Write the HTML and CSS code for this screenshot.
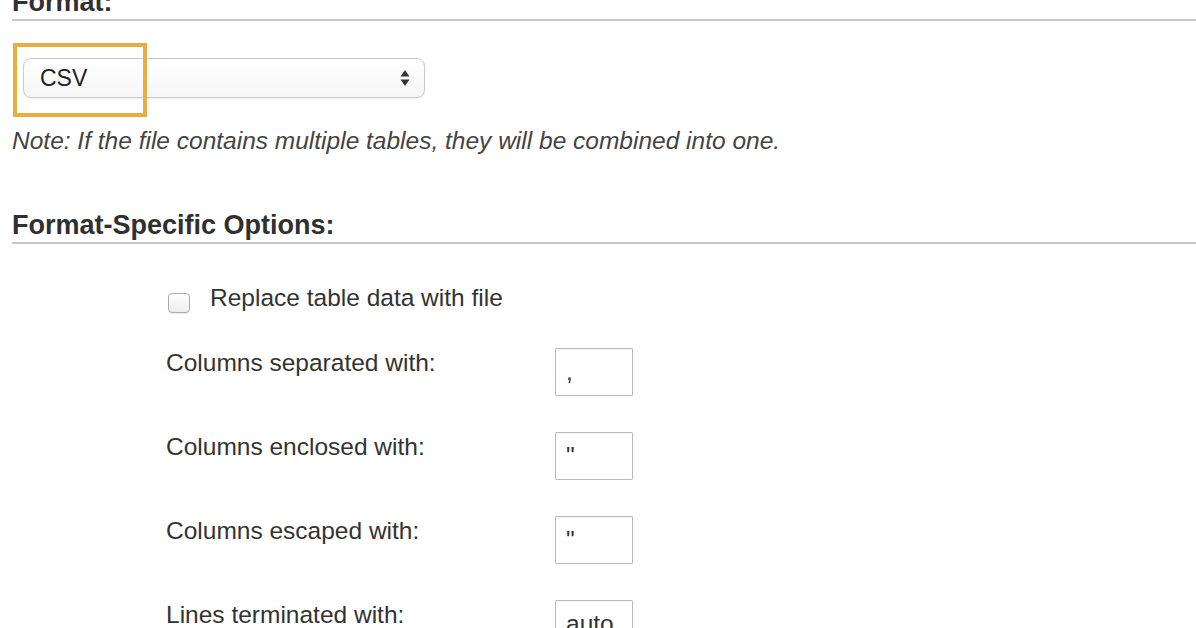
FILE: index.html
```html
<!DOCTYPE html>
<html lang="en">
<head>
  <meta charset="UTF-8" />
  <title>Import - Format</title>
  <link rel="stylesheet" href="styles.css">
</head>
<body>
  <div class="page">
    <h2 class="section-title">Format:</h2>

    <div class="format-field">
      <div class="select-box">
        <span>CSV</span>
        <svg class="select-arrows" width="12" height="18" viewBox="0 0 12 18">
          <path d="M6 1 L10.5 7.5 H1.5 Z" fill="#333"/>
          <path d="M6 17 L10.5 10.5 H1.5 Z" fill="#333"/>
        </svg>
      </div>
      <div class="highlight"></div>
    </div>

    <p class="note">Note: If the file contains multiple tables, they will be combined into one.</p>

    <h2 class="section-title spaced">Format-Specific Options:</h2>

    <div class="options">
      <label class="check-row">
        <input type="checkbox" class="check">
        <span>Replace table data with file</span>
      </label>

      <div class="fields">
        <label for="sep">Columns separated with:</label>
        <input type="text" id="sep" value=",">

        <label for="enc">Columns enclosed with:</label>
        <input type="text" id="enc" value="&quot;">

        <label for="esc">Columns escaped with:</label>
        <input type="text" id="esc" value="&quot;">

        <label for="term">Lines terminated with:</label>
        <input type="text" id="term" value="auto">
      </div>
    </div>
  </div>
</body>
</html>
```

FILE: styles.css
```css
html, body {
  margin: 0;
  background: #fff;
  overflow: hidden;
}
body {
  font-family: "Liberation Sans", Arial, sans-serif;
  color: #333;
  padding-left: 12px;
}
.page {
  margin-top: -13px;
}
.section-title {
  margin: 0;
  font-size: 27px;
  line-height: 30px;
  font-weight: bold;
  color: #303030;
  padding-bottom: 2px;
  border-bottom: 2px solid #c8c8c8;
}
.section-title.spaced {
  margin-top: 54px;
}
.format-field {
  position: relative;
  margin: 37px 0 0 11px;
  width: 402px;
}
.select-box {
  display: flex;
  align-items: center;
  justify-content: space-between;
  box-sizing: border-box;
  width: 402px;
  height: 40px;
  padding: 0 13px 0 16px;
  border: 1px solid #cacaca;
  border-radius: 8px;
  background: linear-gradient(to bottom, #fff, #f6f6f6);
  box-shadow: 0 1px 1px rgba(0,0,0,0.06);
  font-size: 23px;
  color: #222;
}
.highlight {
  position: absolute;
  left: -10px;
  top: -15px;
  width: 134px;
  height: 74px;
  box-sizing: border-box;
  border: 4px solid #e8ae40;
}
.note {
  margin: 28px 0 0;
  font-size: 24.5px;
  line-height: 30px;
  font-style: italic;
  color: #444;
}
.options {
  padding-left: 154px;
}
.check-row {
  display: flex;
  align-items: flex-start;
  gap: 20px;
  margin-top: 39px;
  height: 30px;
  font-size: 24.5px;
  line-height: 30px;
}
.check {
  appearance: none;
  margin: 10px 0 0 2px;
  width: 22px;
  height: 20px;
  border: 1px solid #acacac;
  border-radius: 4px;
  background: linear-gradient(to bottom, #fff, #ececec);
  box-shadow: 0 1px 1px rgba(0,0,0,0.08);
}
.fields {
  display: grid;
  grid-template-columns: 389px 78px;
  row-gap: 36px;
  margin-top: 35px;
  align-items: start;
}
.fields label {
  font-size: 24.5px;
  line-height: 30px;
}
.fields input {
  box-sizing: border-box;
  width: 78px;
  height: 48px;
  margin: 0;
  padding: 0 10px;
  border: 1px solid #bcbcbc;
  border-radius: 1px;
  box-shadow: inset 0 1px 1px rgba(0,0,0,0.05);
  font-family: "Liberation Sans", Arial, sans-serif;
  font-size: 24.5px;
  color: #333;
  outline: none;
}
```
